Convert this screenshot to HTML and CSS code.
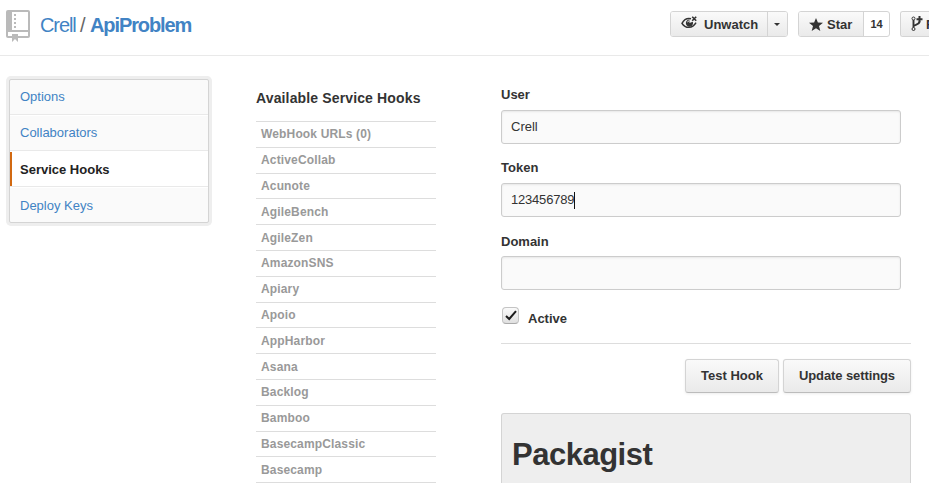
FILE: index.html
```html
<!DOCTYPE html>
<html lang="en">
<head>
<meta charset="utf-8">
<title>Service Hooks</title>
<link rel="stylesheet" href="styles.css">
</head>
<body>
<header class="header">
  <svg class="repo-icon" width="24" height="32" viewBox="0 0 24 32">
    <rect width="24" height="28" rx="2" fill="#bababa"/>
    <path d="M6 2H22V20H6zM2 22H22V26H2z" fill="#fff"/>
    <path d="M8 4h2v2H8zM8 8h2v2H8zM8 12h2v2H8zM8 16h2v2H8z" fill="#bababa"/>
    <path d="M6 24h6v8l-3-3-3 3z" fill="#bababa"/>
  </svg>
  <h1 class="title"><a>Crell</a> <span class="slash">/</span> <a class="repo">ApiProblem</a></h1>
  <div class="actions">
    <div class="group">
      <span class="mini watch">
        <svg width="17" height="14" viewBox="0 0 17 14" fill="none" stroke="#333">
          <path d="M10 2.800C5.500 1.800 2.500 4.500 1 7.300c3.500 5.500 10.500 5.500 14-.6" stroke-width="1.500"/>
          <path d="M8.500 3.500a3.600 3.600 0 1 0 3.300 2.300L8.500 7z" fill="#333" stroke="none"/>
          <path d="M6.500 6.300a2 2 0 0 1 2-1.500" stroke="#eee"/>
          <path d="M11.200 .8l4 4M15.200 .8l-4 4" stroke-width="1.600"/>
        </svg>Unwatch</span>
      <span class="mini drop"><i class="caret"></i></span>
    </div>
    <div class="group">
      <span class="mini star">
        <svg width="14" height="13" viewBox="0 0 14 13"><path d="M7 0l1.900 4.400 5.100.4-4 3.200 1.300 5L7 10.300 2.700 13 4 8 0 4.800l5.100-.4z" fill="#333"/></svg>Star</span>
      <span class="count">14</span>
    </div>
    <div class="group fork-group">
      <span class="mini fork">
        <svg width="12" height="16" viewBox="0 0 12 16" fill="none" stroke="#333">
          <circle cx="2.500" cy="2.500" r="1.500"/><circle cx="2.500" cy="13" r="1.500"/>
          <path d="M2.500 4v7.500M2.500 10.500c0-2 6-1.500 6-5" stroke-width="1.900"/>
          <path d="M5.500 3.200h6M8.500 0v6.200" stroke-width="2"/>
        </svg>F</span>
    </div>
  </div>
</header>
<main class="main">
  <nav class="menu">
    <a>Options</a>
    <a>Collaborators</a>
    <a class="selected">Service Hooks</a>
    <a>Deploy Keys</a>
  </nav>
  <section class="hooks">
    <h2>Available Service Hooks</h2>
    <ul>
      <li>WebHook URLs (0)</li>
      <li>ActiveCollab</li>
      <li>Acunote</li>
      <li>AgileBench</li>
      <li>AgileZen</li>
      <li>AmazonSNS</li>
      <li>Apiary</li>
      <li>Apoio</li>
      <li>AppHarbor</li>
      <li>Asana</li>
      <li>Backlog</li>
      <li>Bamboo</li>
      <li>BasecampClassic</li>
      <li>Basecamp</li>
    </ul>
  </section>
  <section class="form">
    <div class="field"><label>User</label><div class="input">Crell</div></div>
    <div class="field"><label>Token</label><div class="input token">123456789<i class="cursor"></i></div></div>
    <div class="field domain"><label>Domain</label><div class="input"></div></div>
    <div class="active">
      <span class="check"><svg width="12" height="11" viewBox="0 0 12 11"><path d="M1 6l3.200 3L11 1.200" fill="none" stroke="#1c1c1c" stroke-width="2"/></svg></span>
      <label>Active</label>
    </div>
    <div class="buttons"><span class="button">Test Hook</span><span class="button wide">Update settings</span></div>
    <div class="readme"><h1>Packagist</h1></div>
  </section>
</main>
</body>
</html>
```
FILE: styles.css
```css
* { box-sizing: border-box; }
html { overflow: hidden; }
body {
  margin: 0;
  width: 929px;
  height: 483px;
  overflow: hidden;
  background: #fff;
  color: #333;
  font: 13px/18px "Liberation Sans", Arial, sans-serif;
}
h1, h2, ul { margin: 0; padding: 0; }
a { color: #4183c4; }
.header {
  display: flex;
  height: 56px;
  padding: 10px 0 0 6px;
  border-bottom: 1px solid #e9e9e9;
}
.repo-icon { flex: none; }
.title {
  flex: none;
  width: 170px;
  margin-left: 10px;
  font-size: 20px;
  line-height: 30px;
  font-weight: normal;
  letter-spacing: -1.100px;
  white-space: nowrap;
}
.slash { color: #666; margin: 0 1px 0 0; }
.repo { font-weight: bold; }
.actions { display: flex; gap: 10px; margin: 1px 0 0 460px; }
.group {
  display: flex;
  flex: none;
  height: 26px;
  border: 1px solid #d4d4d4;
  border-radius: 3px;
  overflow: hidden;
}
.fork-group { border-right: 0; border-radius: 3px 0 0 3px; }
.mini {
  display: flex;
  align-items: center;
  padding-top: 2px;
  font-weight: bold;
  background: linear-gradient(#fafafa, #eaeaea);
}
.mini svg { flex: none; }
.watch { width: 96px; padding-left: 10px; }
.watch svg { margin: -4px 6px 0 0; }
.drop { width: 20px; border-left: 1px solid #d4d4d4; justify-content: center; padding-top: 0; }
.caret { border: 3px solid transparent; border-top-color: #333; border-bottom: 0; margin-right: 1px; }
.star { width: 64px; padding-left: 10px; }
.star svg { margin: -2px 4px 0 0; }
.count {
  width: 26px;
  border-left: 1px solid #d4d4d4;
  text-align: center;
  font: bold 11px/24px "Liberation Sans", Arial, sans-serif;
}
.fork { width: 28px; padding-left: 10px; overflow: hidden; }
.fork svg { margin: -2px 3px 0 0; }
.main { display: flex; align-items: flex-start; height: 427px; overflow: hidden; padding: 20px 0 0 6px; }
.menu {
  flex: none;
  width: 200px;
  height: 144px;
  margin: 3px;
  border: 1px solid #d4d4d4;
  border-radius: 2px;
  box-shadow: 0 0 0 3px #eee;
  background: #fafafa;
}
.menu a {
  display: block;
  height: 36px;
  padding-left: 10px;
  line-height: 34px;
  border-top: 1px solid #fff;
  border-bottom: 1px solid #e9e9e9;
}
.menu a:first-child { height: 35px; border-top: 0; }
.menu a:last-child { height: 35px; border-bottom: 0; line-height: 36px; }
.menu .selected {
  color: #222;
  font-weight: bold;
  line-height: 36px;
  background: linear-gradient(#d26911, #d26911) 0 0 / 2px 100% no-repeat #fff;
}
.hooks { width: 180px; margin: 13px 0 0 44px; flex: none; }
.hooks h2 { font-size: 14px; line-height: 18px; letter-spacing: .14px; margin-bottom: 14px; white-space: nowrap; }
.hooks ul { list-style: none; border-bottom: 1px solid #ddd; }
.hooks li {
  height: 25.800px;
  padding: 4.400px 0 0 5px;
  border-top: 1px solid #ddd;
  color: #999;
  font-size: 12px;
  font-weight: bold;
  line-height: 17px;
  letter-spacing: .15px;
}
.form { width: 410px; margin: 10px 0 0 65px; flex: none; }
label { display: block; font-weight: bold; }
.field { height: 73.200px; }
.input {
  display: flex;
  align-items: center;
  width: 400px;
  height: 34px;
  margin-top: 6px;
  padding-left: 9px;
  background: #fafafa;
  border: 1px solid #ccc;
  border-radius: 3px;
  box-shadow: inset 0 1px 2px rgba(0, 0, 0, .08);
}
.token { letter-spacing: -.2px; }
.cursor { width: 1px; height: 17px; background: #111; }
.domain label { padding-top: 1px; }
.domain .input { margin-top: 5px; }
.active { display: flex; height: 38.400px; border-bottom: 1px solid #ddd; }
.check {
  display: flex;
  align-items: center;
  justify-content: center;
  width: 17px;
  height: 17px;
  margin: 1px 9px 0 1px;
  border: 1px solid #c4c4c4;
  border-bottom-color: #aaa;
  border-radius: 4px;
  background: linear-gradient(#fafafa, #e0e0e0);
}
.active label { margin-top: 4px; }
.buttons { display: flex; justify-content: flex-end; gap: 4px; margin-top: 15px; }
.button {
  width: 94px;
  height: 34px;
  border: 1px solid #d4d4d4;
  border-bottom-color: #bcbcbc;
  border-radius: 3px;
  background: linear-gradient(#fafafa, #eaeaea);
  box-shadow: 0 1px 3px rgba(0, 0, 0, .075);
  font-weight: bold;
  line-height: 32px;
  text-align: center;
}
.wide { width: 128px; letter-spacing: -.1px; }
.readme {
  height: 70px;
  margin-top: 20px;
  padding: 21px 10px 0;
  border: 1px solid #d4d4d4;
  border-bottom: 0;
  border-radius: 3px 3px 0 0;
  background: #eee;
}
.readme h1 { font-size: 31px; line-height: 40px; letter-spacing: -.5px; }
```
